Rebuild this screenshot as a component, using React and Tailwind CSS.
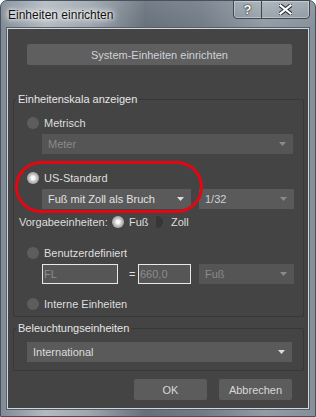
import React from "react";

function Arrow({ c }) {
  return (
    <svg width="7" height="4" viewBox="0 0 7 4" className="shrink-0">
      <path d="M0 0h7L3.5 4z" fill={c} />
    </svg>
  );
}

function Radio({ on }) {
  return on ? (
    <span className="block w-[12px] h-[12px] rounded-full shrink-0 bg-[radial-gradient(circle_at_50%_50%,#ffffff_0,#f4f4f4_22%,#bcbcbc_48%,#8f8f8f_100%)]" />
  ) : (
    <span className="block w-[12px] h-[12px] rounded-full shrink-0 bg-[#5d5d5d]" />
  );
}

function Drop({ text, w, enabled = true, arrowOn = true, textColor }) {
  return (
    <div
      className={`flex items-center justify-between h-[20px] pl-[6px] pr-[7px] ${
        enabled ? "bg-[#5a5a5a]" : "bg-[#555555]"
      }`}
      style={{ width: w }}
    >
      <span className={textColor}>{text}</span>
      <Arrow c={arrowOn ? "#dcdcdc" : "#8a8a8a"} />
    </div>
  );
}

export default function App() {
  return (
    <div className="relative w-[316px] h-[417px] bg-white">
      <div className="w-[316px] h-[417px] rounded-t-[7px] border border-[#48525c] flex flex-col bg-[linear-gradient(180deg,rgba(255,255,255,0.10)_0px,rgba(255,255,255,0)_28px),linear-gradient(90deg,#7f8a95_0%,#b3bac1_14%,#9ea6ae_28%,#66707b_46%,#717b86_64%,#929ca5_84%,#86909a_100%)] font-['Liberation_Sans',Arial,sans-serif]">
        {/* title bar */}
        <div className="h-[27px] flex items-start justify-between">
          <div className="pl-[7px] pt-[7px] text-[12px] leading-[15px] text-[#111] [text-shadow:0_0_6px_#ffffff,0_0_10px_#ffffff,0_0_3px_#ffffff]">
            Einheiten einrichten
          </div>
          <div className="mt-[-1px] mr-[5px] flex h-[19px] rounded-b-[4px] border border-[#3e4852] bg-[linear-gradient(180deg,rgba(255,255,255,0.18),rgba(255,255,255,0.05))] shadow-[inset_0_0_0_1px_rgba(255,255,255,0.35)]">
            <div className="w-[28px] flex items-center justify-center border-r border-[#3e4852] text-white font-bold text-[13px] leading-none [text-shadow:0_0_2px_#222,0_0_1px_#000]">
              ?
            </div>
            <div className="w-[47px] flex items-center justify-center">
              <svg width="13" height="11" viewBox="0 0 13 11">
                <path d="M1.5 1.5l10 8M11.5 1.5l-10 8" stroke="#2a3038" strokeWidth="4.2" strokeLinecap="square" />
                <path d="M1.5 1.5l10 8M11.5 1.5l-10 8" stroke="#ffffff" strokeWidth="2.2" strokeLinecap="square" />
              </svg>
            </div>
          </div>
        </div>

        {/* client */}
        <div className="ml-[6px] w-[302px] border border-[#cfd6dc] outline outline-1 outline-[#56606a]">
          <div className="h-[379px] bg-[#444444] flex flex-col text-[11px] leading-[14px] text-[#dedede]">
            <div className="mt-[15px] ml-[19px] w-[265px] h-[21px] rounded-[2px] bg-[#5f5f5f] flex items-center justify-center text-[#cfd3d8]">
              System-Einheiten einrichten
            </div>

            {/* group 1 */}
            <fieldset className="mt-[27px] ml-[5px] w-[291px] border border-[#383838] rounded-[2px] pb-[4px]">
              <legend className="ml-[2px] px-[2px] leading-[14px] text-[#e6e6e6]">
                Einheitenskala anzeigen
              </legend>
              <div className="mt-[9px] ml-[13px] h-[16px] flex items-center gap-[5px]">
                <Radio />
                <span>Metrisch</span>
              </div>
              <div className="mt-[3px] ml-[28px]">
                <Drop text="Meter" w="251px" enabled={false} arrowOn={false} textColor="text-[#8a8a8a]" />
              </div>
              <div className="mt-[16px] ml-[13px] h-[16px] flex items-center gap-[5px]">
                <Radio on />
                <span>US-Standard</span>
              </div>
              <div className="mt-[3px] ml-[28px] flex gap-[8px]">
                <Drop text="Fuß mit Zoll als Bruch" w="149px" textColor="text-[#e2e2e2]" />
                <Drop text="1/32" w="95px" arrowOn={false} textColor="text-[#d0d0d0]" />
              </div>
              <div className="mt-[5px] ml-[5px] h-[16px] flex items-center">
                <span className="w-[93px]">Vorgabeeinheiten:</span>
                <Radio on />
                <span className="ml-[5px] w-[27px]">Fuß</span>
                <span className="block w-[7px] h-[12px] rounded-r-full bg-[#363636]" />
                <span className="ml-[8px]">Zoll</span>
              </div>
              <div className="mt-[15px] ml-[13px] h-[16px] flex items-center gap-[5px]">
                <Radio />
                <span>Benutzerdefiniert</span>
              </div>
              <div className="mt-[3px] ml-[28px] flex items-center">
                <div className="w-[76px] h-[20px] border border-[#e8e8e8] bg-[#565656] pl-[1px] flex items-center text-[#8c8c8c]">
                  FL
                </div>
                <span className="ml-[11px] w-[9px] text-[#e0e0e0]">=</span>
                <div className="w-[53px] h-[20px] border border-[#e8e8e8] bg-[#565656] pl-[1px] flex items-center text-[#8c8c8c]">
                  660,0
                </div>
                <div className="ml-[8px]">
                  <Drop text="Fuß" w="95px" enabled={false} arrowOn={false} textColor="text-[#8a8a8a]" />
                </div>
              </div>
              <div className="mt-[12px] ml-[13px] h-[16px] flex items-center gap-[5px]">
                <Radio />
                <span>Interne Einheiten</span>
              </div>
            </fieldset>

            {/* group 2 */}
            <fieldset className="mt-[4px] ml-[5px] w-[291px] border border-[#383838] rounded-[2px] pb-[8px]">
              <legend className="ml-[2px] px-[2px] leading-[14px] text-[#e6e6e6]">
                Beleuchtungseinheiten
              </legend>
              <div className="mt-[7px] ml-[13px]">
                <Drop text="International" w="265px" textColor="text-[#dcdcdc]" />
              </div>
            </fieldset>

            <div className="mt-[8px] ml-[126px] flex gap-[12px]">
              <div className="w-[73px] h-[21px] rounded-[2px] bg-[#5c5c5c] flex items-center justify-center text-[#d8d8d8]">
                OK
              </div>
              <div className="w-[73px] h-[21px] rounded-[2px] bg-[#5c5c5c] flex items-center justify-center text-[#d8d8d8]">
                Abbrechen
              </div>
            </div>
          </div>
        </div>
      </div>

      {/* red annotation marker */}
      <div className="absolute left-[15px] top-[161px] w-[188px] h-[52px] rounded-full border-[3px] border-[#e30613] pointer-events-none" />
    </div>
  );
}
